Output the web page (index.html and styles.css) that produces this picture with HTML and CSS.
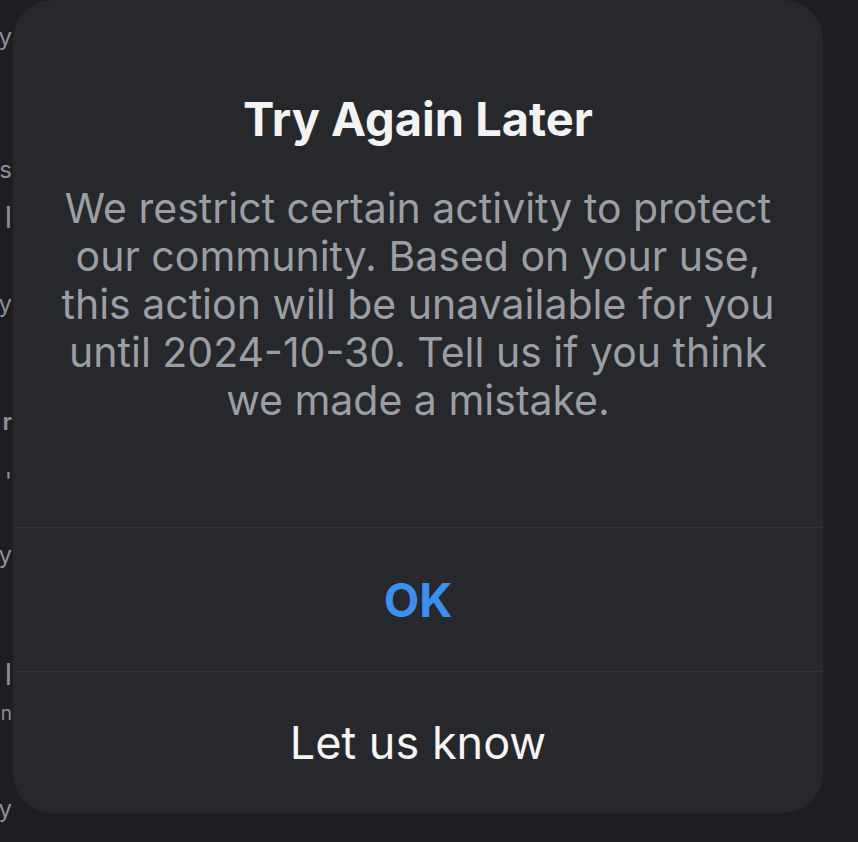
FILE: index.html
```html
<!DOCTYPE html>
<html lang="en">
<head>
    <meta charset="UTF-8">
    <title>Try Again Later</title>
    <link rel="stylesheet" href="styles.css">
</head>
<body>
<div class="page">
    <!-- the feed behind the sheet, only its last letters show -->
    <div class="behind">
        <div class="frag f1">y</div>
        <div class="frag f2">s</div>
        <div class="frag f3 tall">l</div>
        <div class="frag f4">y</div>
        <div class="frag f5 bold">r</div>
        <div class="frag f6">'</div>
        <div class="frag f7">y</div>
        <div class="frag f8 tall">l</div>
        <div class="frag f9 small">n</div>
        <div class="frag f10">y</div>
    </div>

    <div class="dialog">
        <div class="dialog-body">
            <h1 class="title">Try Again Later</h1>
            <p class="message">We restrict certain activity to protect<br>
                our community. Based on your use,<br>
                this action will be unavailable for you<br>
                until 2024-10-30. Tell us if you think<br>
                we made a mistake.</p>
        </div>
        <div class="action ok">OK</div>
        <div class="action">Let us know</div>
    </div>
</div>
</body>
</html>
```

FILE: styles.css
```css
* {
    padding: 0;
    margin: 0;
    box-sizing: border-box;
}

body {
    background: #1c1e22;
    font-family: Inter, "Noto Sans", sans-serif;
    overflow: hidden;
}

.page {
    width: 858px;
    height: 842px;
    position: relative;
}

.behind {
    width: 13px;
    display: flex;
    flex-direction: column;
    align-items: flex-end;
}

.frag {
    font-size: 24px;
    line-height: 30px;
    height: 30px;
    color: #8d8f94;
    white-space: nowrap;
    padding-right: 1px;
}

.frag.bold {
    font-weight: 600;
}

.frag.tall {
    font-size: 30px;
}

.frag.small {
    font-size: 19px;
}

.f1 { margin-top: 22px; }
.f2 { margin-top: 103px; }
.f3 { margin-top: 17px; }
.f4 { margin-top: 57px; }
.f5 { margin-top: 88px; }
.f6 { margin-top: 30px; }
.f7 { margin-top: 43px; }
.f8 { margin-top: 89px; }
.f9 { margin-top: 10px; }
.f10 { margin-top: 65px; }

.dialog {
    position: absolute;
    left: 13px;
    top: 0;
    width: 810px;
    height: 813px;
    background: #26282c;
    border-radius: 40px;
    display: flex;
    flex-direction: column;
    text-align: center;
}

.dialog-body {
    height: 527px;
    padding-top: 91px;
}

.title {
    font-size: 47px;
    line-height: 56px;
    font-weight: 700;
    color: #f3f3f4;
}

.message {
    margin-top: 37px;
    font-size: 41px;
    line-height: 48px;
    color: #9c9ea5;
}

.action {
    flex: 1;
    border-top: 1px solid #313338;
    display: flex;
    align-items: center;
    justify-content: center;
    font-size: 45px;
    color: #f5f5f6;
}

.action.ok {
    flex: 0 0 144px;
    font-weight: 700;
    font-size: 46px;
    color: #3b8ff0;
}
```
